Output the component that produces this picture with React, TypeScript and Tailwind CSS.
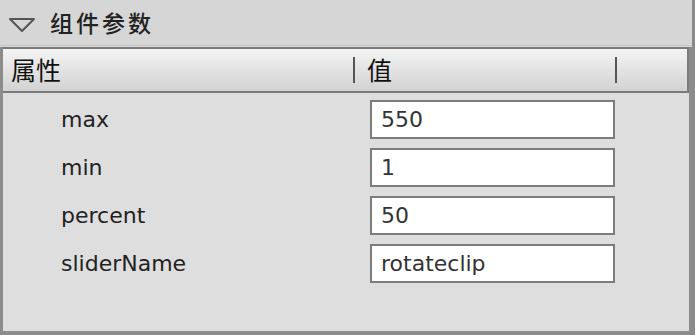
const rows = [
  { name: 'max', value: '550' },
  { name: 'min', value: '1' },
  { name: 'percent', value: '50' },
  { name: 'sliderName', value: 'rotateclip' },
]

const latin = "font-['DejaVu_Sans',sans-serif]"
const cjk = "font-['Noto_Sans_CJK_SC',sans-serif]"

export default function App() {
  return (
    <div className="w-[695px] h-[335px] bg-[#d9d9d9] flex flex-col border-r-[3px] border-[#8a8a8a] overflow-hidden">
      {/* panel title */}
      <div className="h-[46px] shrink-0 flex items-center gap-[14px] pl-[8px] bg-[#d6d6d6] border-b border-[#c4c4c4]">
        <svg width="28" height="16" viewBox="0 0 28 16" className="mt-1">
          <path d="M2 2 L26 2 L14 14 Z" fill="none" stroke="#555" strokeWidth="2" strokeLinejoin="round" />
        </svg>
        <span className={`${cjk} text-[23px] tracking-[3px] text-[#222] font-medium`}>组件参数</span>
      </div>

      {/* property grid */}
      <div className="flex-1 flex flex-col border-l-[3px] border-b-[4px] border-r-[3px] border-[#8c8c8c] bg-[#dedede] mt-[1px]">
        <div className="h-[46px] shrink-0 flex items-center border-y-2 border-r-2 border-[#7a7a7a] bg-linear-to-b from-[#f4f4f4] to-[#d2d2d2]">
          <span className={`${cjk} w-[350px] pl-[8px] text-[25px] text-[#111]`}>属性</span>
          <span className="w-[2px] h-[26px] bg-[#555]" />
          <span className={`${cjk} w-[260px] pl-[12px] text-[25px] text-[#111]`}>值</span>
          <span className="w-[2px] h-[26px] bg-[#555]" />
        </div>

        <div className="flex flex-col gap-[9px] pt-[7px]">
          {rows.map((r) => (
            <div key={r.name} className="h-[39px] flex items-center">
              <span className={`${latin} w-[367px] pl-[58px] text-[22px] text-[#222]`}>{r.name}</span>
              <div className={`${latin} w-[245px] h-[39px] flex items-center px-[9px] bg-white border-2 border-[#7c7c7c] text-[22px] text-[#333]`}>
                {r.value}
              </div>
            </div>
          ))}
        </div>
      </div>
    </div>
  )
}
